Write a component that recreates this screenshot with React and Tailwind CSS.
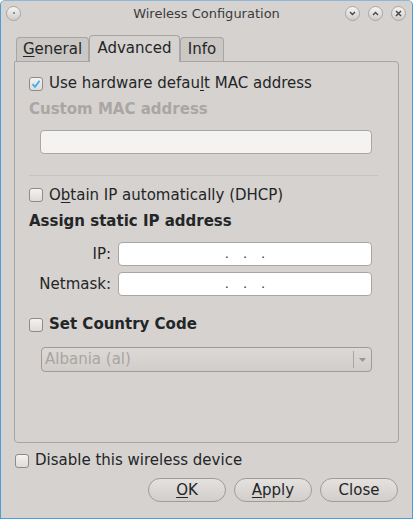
import { useState } from "react";

const FONT = { fontFamily: '"DejaVu Sans", "Liberation Sans", sans-serif' };

function Check({ checked, onChange }) {
  return (
    <span
      onClick={onChange}
      className="w-[14px] h-[14px] shrink-0 rounded-[3px] border border-[#8f8b89] bg-gradient-to-b from-[#f4f3f2] to-[#dedbd9] flex items-center justify-center"
    >
      {checked && (
        <svg width="10" height="10" viewBox="0 0 10 10">
          <path d="M1.5 5.2 L4 7.8 L8.6 1.8" fill="none" stroke="#3daee9" strokeWidth="1.8" />
        </svg>
      )}
    </span>
  );
}

function TitleBtn({ children }) {
  return (
    <span className="w-[15px] h-[15px] rounded-full border border-[#a9a5a2] bg-gradient-to-b from-[#f6f5f4] to-[#cfcbc9] flex items-center justify-center">
      {children}
    </span>
  );
}

function IpInput() {
  return (
    <div className="flex-1 h-[24px] rounded-[4px] border border-[#a9a5a3] bg-white flex items-center justify-center gap-[14px] text-[13px] text-[#31363b]">
      <span>.</span><span>.</span><span>.</span>
    </div>
  );
}

export default function App() {
  const [hw, setHw] = useState(true);
  const [dhcp, setDhcp] = useState(false);
  const [cc, setCc] = useState(false);
  const [dis, setDis] = useState(false);

  return (
    <div style={FONT} className="w-[413px] h-[519px] bg-[#d6d2d0] text-[#232627] border border-[#4a9fd8] border-t-[#8fb8d8] rounded-t-[5px] flex flex-col overflow-hidden">
      {/* titelleiste */}
      <div className="h-[24px] grid grid-cols-[1fr_auto_1fr] items-center px-[5px]">
        <div className="flex">
          <TitleBtn>
            <span className="w-[2px] h-[2px] rounded-full bg-[#777]" />
          </TitleBtn>
        </div>
        <div className="text-center text-[13px] text-[#3b3b3b] pt-[1px]">Wireless Configuration</div>
        <div className="flex justify-end gap-[8px] pr-[1px]">
          <TitleBtn>
            <svg width="7" height="5" viewBox="0 0 7 5"><path d="M1 1 L3.5 3.5 L6 1" fill="none" stroke="#444" strokeWidth="1.3" /></svg>
          </TitleBtn>
          <TitleBtn>
            <svg width="7" height="5" viewBox="0 0 7 5"><path d="M1 4 L3.5 1.5 L6 4" fill="none" stroke="#444" strokeWidth="1.3" /></svg>
          </TitleBtn>
          <TitleBtn>
            <svg width="7" height="7" viewBox="0 0 7 7"><path d="M1 1 L6 6 M6 1 L1 6" fill="none" stroke="#444" strokeWidth="1.4" /></svg>
          </TitleBtn>
        </div>
      </div>

      <div className="px-[13px] pt-[10px] flex flex-col flex-1">
        {/* tabs */}
        <div className="flex items-end h-[26px] pl-[2px] relative z-10">
          <div className="h-[24px] w-[73px] border border-b-0 border-[#a9a5a3] rounded-t-[4px] bg-[#cbc7c5] text-[15px] flex items-center justify-center">
            <span><span className="underline underline-offset-2">G</span>eneral</span>
          </div>
          <div className="h-[27px] w-[91px] border border-b-0 border-[#a9a5a3] rounded-t-[4px] bg-[#d6d2d0] text-[15px] flex items-center justify-center -mb-[1px] pb-[2px]">
            Advanced
          </div>
          <div className="h-[24px] w-[44px] border border-b-0 border-[#a9a5a3] rounded-t-[4px] bg-[#cbc7c5] text-[15px] flex items-center justify-center">
            Info
          </div>
        </div>

        {/* panel */}
        <div className="h-[382px] border border-[#a9a5a3] rounded-b-[4px] rounded-tr-[4px] px-[14px] pt-[14px] flex flex-col">
          <label className="flex items-center gap-[6px] text-[15px] h-[15px]">
            <Check checked={hw} onChange={() => setHw(!hw)} />
            <span>Use hardware defau<span className="underline underline-offset-2">l</span>t MAC address</span>
          </label>
          <div className="mt-[7px] text-[15px] font-bold text-[#aaa6a4]">Custom MAC address</div>
          <div className="mt-[9px] ml-[11px] mr-[12px] h-[24px] rounded-[4px] border border-[#aaa6a4] bg-[#f4f3f2]" />

          <div className="mt-[21px] mr-[6px] h-[1px] bg-[#c6c2c0]" />

          <label className="mt-[12px] flex items-center gap-[6px] text-[15px] h-[15px]">
            <Check checked={dhcp} onChange={() => setDhcp(!dhcp)} />
            <span>O<span className="underline underline-offset-2">b</span>tain IP automatically (DHCP)</span>
          </label>
          <div className="mt-[7px] text-[15px] font-bold">Assign static IP address</div>

          <div className="mt-[10px] mr-[12px] flex items-center gap-[7px]">
            <div className="w-[82px] text-right text-[15px]">IP:</div>
            <IpInput />
          </div>
          <div className="mt-[6px] mr-[12px] flex items-center gap-[7px]">
            <div className="w-[82px] text-right text-[15px]">Netmask:</div>
            <IpInput />
          </div>

          <label className="mt-[21px] flex items-center gap-[6px] text-[15px] h-[15px] font-bold">
            <Check checked={cc} onChange={() => setCc(!cc)} />
            <span>Set Country Code</span>
          </label>

          <div className="mt-[15px] ml-[12px] mr-[12px] h-[25px] rounded-[4px] border border-[#9f9b99] bg-gradient-to-b from-[#dcd9d7] to-[#d1cdcb] flex items-center text-[15px] text-[#a9a5a3]">
            <span className="flex-1 pl-[3px]">Albania (al)</span>
            <span className="w-[1px] h-[17px] bg-[#a9a5a3]" />
            <span className="w-[17px] flex items-center justify-center">
              <svg width="7" height="4" viewBox="0 0 7 4"><path d="M0 0 H7 L3.5 4 Z" fill="#9a9694" /></svg>
            </span>
          </div>
        </div>

        <label className="mt-[10px] ml-[1px] flex items-center gap-[6px] text-[15px] h-[15px]">
          <Check checked={dis} onChange={() => setDis(!dis)} />
          <span>Disable this wireless device</span>
        </label>

        <div className="mt-[10px] flex justify-end gap-[8px] pr-[1px]">
          {[
            ["O", "K"],
            ["A", "pply"],
            ["", "Close"],
          ].map(([u, rest], i) => (
            <button
              key={i}
              className="w-[78px] h-[24px] rounded-full border border-[#9f9b99] bg-gradient-to-b from-[#e4e1df] to-[#d2cecc] text-[15px] text-[#232627] flex items-center justify-center"
            >
              <span>{u && <span className="underline underline-offset-2">{u}</span>}{rest}</span>
            </button>
          ))}
        </div>
      </div>
    </div>
  );
}
